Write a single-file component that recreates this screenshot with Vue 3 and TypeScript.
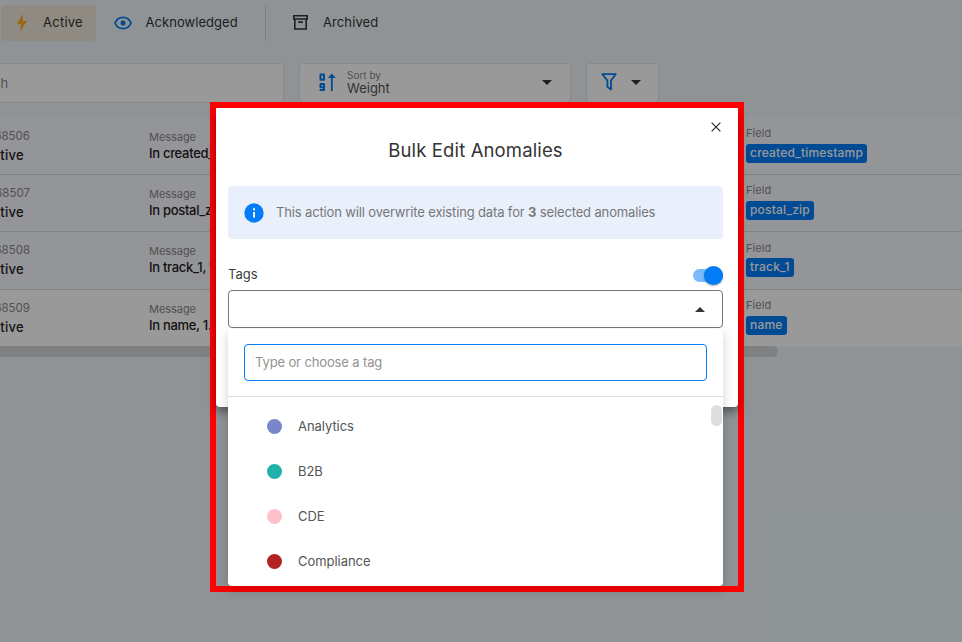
<script setup lang="ts">
interface Anomaly {
  id: string
  message: string
  field: string
}

interface Tag {
  name: string
  color: string
}

const anomalies: Anomaly[] = [
  { id: '68506', message: 'In created_timestamp', field: 'created_timestamp' },
  { id: '68507', message: 'In postal_zip, 1.2', field: 'postal_zip' },
  { id: '68508', message: 'In track_1, 1.4', field: 'track_1' },
  { id: '68509', message: 'In name, 1.1', field: 'name' },
]

const tags: Tag[] = [
  { name: 'Analytics', color: '#7986cb' },
  { name: 'B2B', color: '#20b2aa' },
  { name: 'CDE', color: '#ffc0cb' },
  { name: 'Compliance', color: '#b22222' },
]
</script>

<template>
  <div class="screen">
    <div class="page">
      <nav class="tabs">
        <div class="tab active">
          <svg width="12" height="18" viewBox="0 0 12 18"><path d="M6.8 0 .8 10h4.1L4.2 17.5 11 7H6.8z" fill="#fdb022" /></svg>
          <span>Active</span>
        </div>
        <div class="tab ack">
          <svg width="18" height="14" viewBox="0 0 18 14">
            <path d="M1 7C2.5 3.2 5.4 1.3 9 1.3S15.500 3.200 17 7c-1.500 3.800-4.400 5.700-8 5.700S2.500 10.800 1 7z" fill="none" stroke="#027df7" stroke-width="1.7" />
            <circle cx="9" cy="7" r="2.500" fill="#027df7" />
          </svg>
          <span>Acknowledged</span>
        </div>
        <i class="rule"></i>
        <div class="tab arch">
          <svg width="15" height="15" viewBox="0 0 15 15" fill="none" stroke="#333" stroke-width="1.600">
            <path d="M.8.8h13.400v3.200H.8zM1.800 4v10h11.400V4M5.200 7.100h4.600" />
          </svg>
          <span>Archived</span>
        </div>
      </nav>

      <div class="controls">
        <div class="box search">Search</div>
        <div class="box sort">
          <svg width="17" height="19" viewBox="0 0 17 19" fill="none" stroke="#027df7" stroke-width="2">
            <path d="M1.500 1.500h3.500v5.300H1.500zM5 14.200H1.500v-3.200h3.500v6H.6" stroke-linejoin="round" />
            <path d="M12.800 18V3" stroke-width="1.800" />
            <path d="M8.800 5 12.800.6 16.800 5z" fill="#027df7" stroke="none" />
          </svg>
          <div class="sort-text"><small>Sort by</small><span>Weight</span></div>
          <i class="caret"></i>
        </div>
        <div class="box filter">
          <svg width="16" height="18" viewBox="0 0 16 18" fill="none" stroke="#027df7" stroke-width="1.800">
            <path d="M1.300 1.200h13.400L10 7.500v9L6.400 13.800V7.500z" stroke-linejoin="round" />
          </svg>
          <i class="caret"></i>
        </div>
      </div>

      <div class="table">
        <div v-for="a in anomalies" :key="a.id" class="row">
          <div class="status">
            <div class="id">{{ a.id }}</div>
            <div class="state">Active</div>
          </div>
          <div class="message">
            <div class="label">Message</div>
            <div class="value">{{ a.message }}</div>
          </div>
          <div class="field">
            <div class="label">Field</div>
            <span class="chip">{{ a.field }}</span>
          </div>
        </div>
        <div class="scroll"><i></i></div>
      </div>
    </div>

    <div class="overlay"></div>

    <div class="frame">
      <section class="dialog">
        <header>
          <svg class="close" width="10" height="10" viewBox="0 0 10 10"><path d="M.6.6l8.800 8.800M9.400.6.6 9.400" stroke="#333" stroke-width="1.300" /></svg>
        </header>
        <h2>Bulk Edit Anomalies</h2>
        <div class="notice">
          <svg width="20" height="20" viewBox="0 0 20 20">
            <circle cx="10" cy="10" r="9.700" fill="#027df7" />
            <path d="M9.100 9h1.900v5.500H9.100zM9.100 5.300h1.900v1.900H9.100z" fill="#fff" />
          </svg>
          <p>This action will overwrite existing data for <b>3</b> selected anomalies</p>
        </div>
        <div class="tag-head">
          <span>Tags</span>
          <div class="switch"><i></i></div>
        </div>
        <div class="select"><i class="caret up"></i></div>
      </section>
      <div class="menu">
        <div class="type"><div class="input">Type or choose a tag</div></div>
        <div class="options">
          <div v-for="t in tags" :key="t.name" class="option">
            <i :style="{ background: t.color }"></i>
            <span>{{ t.name }}</span>
          </div>
          <div class="thumb"></div>
        </div>
      </div>
    </div>
  </div>
</template>

<style>
body { margin: 0; }
</style>

<style scoped>
* { box-sizing: border-box; }
svg { display: block; flex: none; }
.screen {
  position: relative;
  width: 962px;
  height: 642px;
  overflow: hidden;
  font-family: Inter, 'Liberation Sans', sans-serif;
  font-size: 13px;
  color: #3c3c3c;
  white-space: nowrap;
}
.page { height: 642px; background: #eff6fa; }
.overlay { position: absolute; inset: 0; background: rgba(0, 0, 0, .4); }

.tabs { display: flex; align-items: center; height: 63px; padding: 0 0 18px 1px; color: #333; }
.tab { display: flex; align-items: center; height: 36px; }
.tab span { padding-bottom: 2px; }
.tab.active { width: 95px; padding-left: 15px; gap: 15px; background: #efe8da; border-radius: 4px; letter-spacing: .25px; }
.ack { width: 142px; padding-left: 18px; gap: 13.500px; letter-spacing: .05px; }
.rule { width: 1px; height: 36px; margin-left: 27px; background: #d2d8dd; }
.arch { padding-left: 27px; gap: 15px; letter-spacing: .1px; }

.controls { display: flex; height: 39px; }
.box { display: flex; align-items: center; height: 40px; background: #fff; border: 1px solid #dfe3e6; border-radius: 4px; }
.search { width: 324px; margin-left: -40px; padding-left: 4px; color: #888; }
.sort { width: 272px; margin-left: 15px; padding: 0 18px 2px 19px; }
.sort-text { display: flex; flex-direction: column; flex: 1; padding-left: 11px; }
.sort-text small { font-size: 10px; line-height: 12px; color: #888; }
.sort-text span { line-height: 14px; color: #555; }
.caret { border: 5px solid transparent; border-top-color: #333; border-bottom: 0; }
.filter { width: 73px; margin-left: 15px; padding: 0 0 2px 14px; gap: 14px; }

.table { padding-top: 16px; }
.row { display: grid; grid-template-columns: 149px 597px 1fr; height: 57.200px; background: #f7f8ff; border-bottom: 1px solid #d8dade; }
.row:nth-child(4) { height: 56.400px; background: #fff; border-bottom: 0; }
.status { padding-top: 10px; }
.id, .state { display: flex; justify-content: flex-end; overflow: hidden; }
.id { width: 30px; line-height: 16px; font-size: 11.500px; color: #888; }
.state { width: 24px; margin-top: 3px; line-height: 17px; font-weight: 500; letter-spacing: .3px; color: #222; }
.message { padding-top: 11px; }
.label { font-size: 11px; line-height: 16px; color: #888; }
.message .label { letter-spacing: -.05px; }
.value { line-height: 17px; font-weight: 500; letter-spacing: -.3px; color: #222; }
.field { padding-top: 7.300px; }
.field .label { margin-bottom: 2.700px; letter-spacing: .05px; }
.chip { display: block; width: fit-content; height: 19px; padding: 0 4px; border-radius: 3px; background: #027df7; color: #fff; font-size: 12px; font-weight: 500; line-height: 18px; letter-spacing: .2px; }
.scroll { height: 11px; background: #f1f5fa; }
.scroll i { display: block; width: 778px; height: 11px; background: #d3d5d9; border-radius: 0 6px 6px 0; }

.frame { position: absolute; left: 210px; top: 102px; width: 534px; height: 490px; border: 6px solid red; }
.dialog { height: 299px; padding: 14px 15px 0 12px; background: #fff; border-radius: 0 0 4px 4px; box-shadow: 0 5px 9px rgba(0, 0, 0, .4); }
header { display: flex; justify-content: flex-end; padding-right: 2px; }
h2 { margin: 6px 0 0; text-align: center; font-size: 18.500px; font-weight: 400; line-height: 24px; letter-spacing: .13px; color: #333; }
.notice { display: flex; align-items: center; height: 53px; margin-top: 24px; padding-left: 16px; gap: 12px; border-radius: 4px; background: #e9f0fc; color: #777; }
.notice p { margin: 0; padding-bottom: 2px; letter-spacing: -.145px; }
.notice b { font-weight: 700; }
.tag-head { display: flex; align-items: center; justify-content: space-between; height: 23px; margin-top: 25px; color: #3c3c3c; }
.tag-head span { padding-bottom: 3px; }
.switch { display: flex; align-items: center; justify-content: flex-end; width: 30px; height: 13px; border-radius: 7px; background: #7ab9fb; }
.switch i { width: 19px; height: 19px; border-radius: 50%; background: #027df7; box-shadow: 0 1px 2px rgba(0, 0, 0, .35); }
.select { display: flex; align-items: center; justify-content: flex-end; height: 38px; margin-top: 3px; padding-right: 17px; border: 1px solid #777; border-radius: 4px; }
.caret.up { border-bottom: 5px solid #333; border-top: 0; }

.menu { position: absolute; left: 12px; top: 221px; width: 495px; height: 257px; background: #fff; border-radius: 0 0 4px 4px; box-shadow: 0 4px 12px rgba(0, 0, 0, .18); }
.type { height: 68px; padding: 15px 16px 0; border-bottom: 1px solid #dcdfe1; }
.input { height: 37px; padding-left: 10px; border: 1px solid #027df7; border-radius: 4px; line-height: 35px; letter-spacing: -.13px; color: #929292; }
.options { position: relative; padding-top: 7px; }
.option { display: flex; align-items: center; height: 45px; padding-left: 39px; gap: 16px; color: #555; }
.option span { padding-bottom: 2px; letter-spacing: -.05px; }
.option i { width: 15px; height: 15px; border-radius: 50%; }
.thumb { position: absolute; right: 1px; top: 8px; width: 11px; height: 21px; border-radius: 6px; background: #dedede; }
</style>
